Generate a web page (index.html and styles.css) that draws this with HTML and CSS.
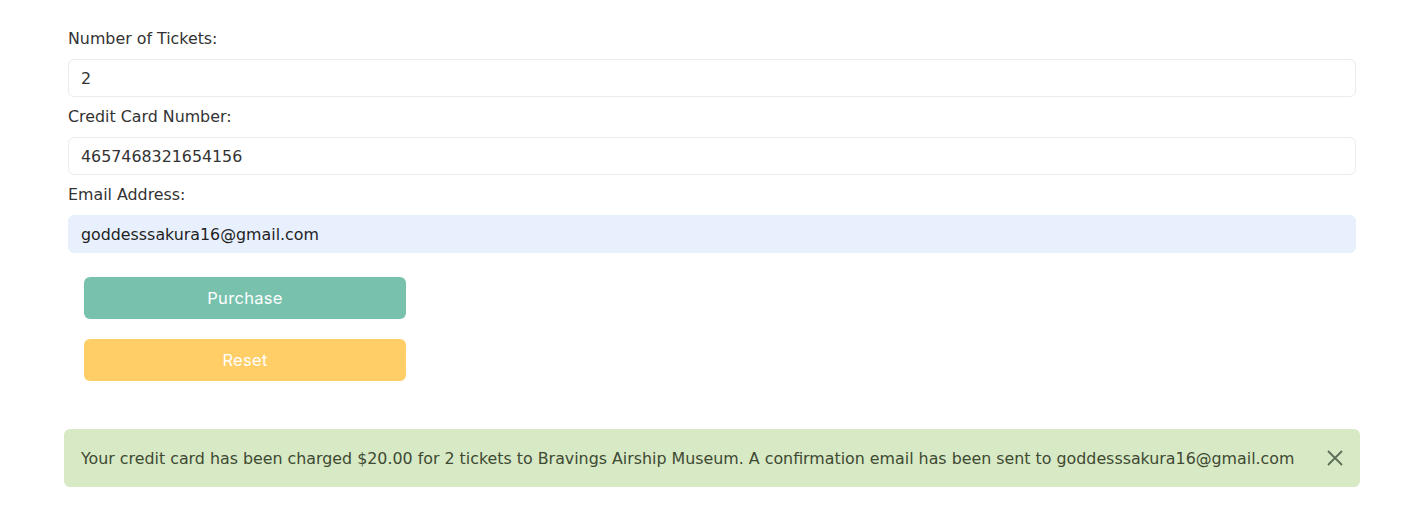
FILE: index.html
```html
<!DOCTYPE html>
<html lang="en">
<head>
<meta charset="utf-8">
<title>Purchase Tickets</title>
<link rel="stylesheet" href="styles.css">
</head>
<body>
<div class="page">
  <form class="form">
    <div class="field">
      <label class="label" for="tickets">Number of Tickets:</label>
      <input class="input" id="tickets" type="text" value="2">
    </div>
    <div class="field">
      <label class="label" for="card">Credit Card Number:</label>
      <input class="input" id="card" type="text" value="4657468321654156">
    </div>
    <div class="field">
      <label class="label" for="email">Email Address:</label>
      <input class="input input-autofill" id="email" type="text" value="goddesssakura16@gmail.com">
    </div>
    <div class="actions">
      <button type="button" class="btn btn-primary">Purchase</button>
      <button type="button" class="btn btn-warning">Reset</button>
    </div>
  </form>
  <div class="alert">
    <span class="alert-text">Your credit card has been charged $20.00 for 2 tickets to Bravings Airship Museum. A confirmation email has been sent to goddesssakura16@gmail.com</span>
    <button type="button" class="close" aria-label="Close">
      <svg width="16" height="16" viewBox="0 0 16 16"><path d="M1 1L15 15M15 1L1 15" stroke="currentColor" stroke-width="1.8" fill="none"/></svg>
    </button>
  </div>
</div>
</body>
</html>
```
FILE: styles.css
```css
* { box-sizing: border-box; }
html, body { margin: 0; background: #fff; }
body {
  font-family: "DejaVu Sans", "Open Sans", sans-serif;
  font-size: 15.85px;
  color: #333;
}
.page {
  width: 1296px;
  margin-left: 64px;
  padding-top: 27px;
}
.form {
  padding: 0 4px;
}
.field {
  display: flex;
  flex-direction: column;
}
.field + .field .label { margin-top: 8px; }
.label {
  line-height: 24px;
  margin-bottom: 8px;
  color: #333;
}
.input {
  height: 38px;
  border: 1px solid #ebebeb;
  border-radius: 6px;
  padding: 0 12px;
  font: inherit;
  color: #333;
  background: #fff;
  outline: none;
}
.input-autofill {
  background: #e8f0fe;
  border-color: #e8f0fe;
  color: #1f1f1f;
}
.actions {
  display: flex;
  flex-direction: column;
  gap: 20px;
  padding: 24px 16px 0;
  width: 354px;
}
.btn {
  height: 42px;
  border: 0;
  border-radius: 6px;
  color: #fff;
  font-family: "Inter", "Open Sans", sans-serif;
  font-size: 16.5px;
  letter-spacing: 0.3px;
  cursor: pointer;
}
.btn-primary { background: #78c2ad; }
.btn-warning { background: #ffce67; }
.alert {
  margin-top: 48px;
  height: 58px;
  background: #d8e9c5;
  border-radius: 6px;
  display: flex;
  align-items: center;
  justify-content: space-between;
  padding: 0 17px;
  color: #3e4a33;
}
.close {
  border: 0;
  background: none;
  padding: 0;
  color: #5d6e58;
  display: flex;
}
```
